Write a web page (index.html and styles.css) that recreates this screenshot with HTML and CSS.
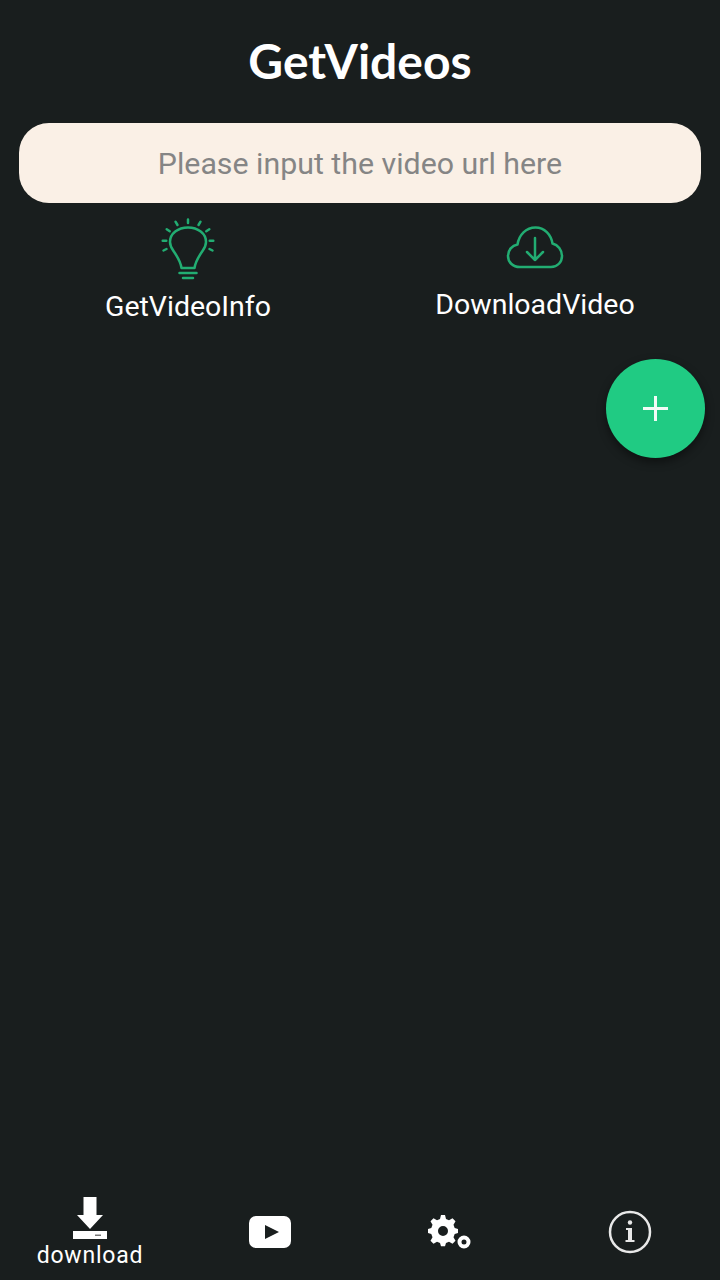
FILE: index.html
```html
<!DOCTYPE html>
<html>
<head>
    <title>GetVideos</title>
    <link rel="stylesheet" href="styles.css">
</head>
<body>
    <div class="app">
        <h1 class="title">GetVideos</h1>
        <div class="url-box">Please input the video url here</div>
        <div class="actions">
            <div class="action action-info">
                <svg class="bulb" width="54" height="64" viewBox="0 0 54 64" fill="none" stroke="#22ad72" stroke-width="2.500" stroke-linecap="round" stroke-linejoin="round">
                    <path d="M27 1.500v3.500M14.500 3.700l2 3.300M39.500 3.700l-2 3.300M5.700 11.300l3 2M48.300 11.300l-3 2M1.700 22.700h3.600M48.700 22.700h3.600M2.500 32.500l3-1.500M51.500 32.500l-3-1.500"/>
                    <path d="M20.500 50C19.500 43 16 38 12.500 33 10 29.500 9 27 9 24 9 15.500 17 9.500 27 9.500S45 15.500 45 24c0 3-1 5.500-3.500 9C38 38 34.500 43 33.500 50z"/>
                    <path d="M18.500 55h17M22 60h10"/>
                </svg>
                <span class="action-label">GetVideoInfo</span>
            </div>
            <div class="action">
                <svg class="cloud" width="58" height="46" viewBox="0 0 58 46" fill="none" stroke="#22ad72" stroke-width="2.500" stroke-linecap="round" stroke-linejoin="round">
                    <path d="M14 42C6.500 42 2 37 2 31c0-6 4-10.500 9.500-11.500C13 10 20 2.500 29.500 2.500c9 0 15.500 7 17 16C52 20 56 25 56 31c0 6-4.500 11-11 11z"/>
                    <path d="M29 13v22M21 27l8 8 8-8"/>
                </svg>
                <span class="action-label">DownloadVideo</span>
            </div>
        </div>
        <div class="fab">
            <svg width="25" height="25" viewBox="0 0 25 25" stroke="#f2fbf6" stroke-width="3">
                <path d="M12.500 0v25M0 12.500h25"/>
            </svg>
        </div>
        <div class="spacer"></div>
        <div class="tabs">
            <div class="tab tab-active">
                <svg width="34" height="44" viewBox="0 0 34 44" fill="#fff">
                    <path d="M10.500 0h13v18H30L17 32 4 18h6.500z"/>
                    <path d="M0 34h34v8H0z"/>
                    <path d="M22 37.500h6v1.500h-6z" fill="#777"/>
                </svg>
                <span class="tab-label">download</span>
            </div>
            <div class="tab">
                <svg width="42" height="32" viewBox="0 0 42 32">
                    <rect width="42" height="32" rx="7" fill="#fff"/>
                    <path d="M16 9l14 7-14 7z" fill="#191e1e"/>
                </svg>
            </div>
            <div class="tab">
                <svg width="44" height="34" viewBox="0 0 44 34" fill="#fff">
                    <path fill-rule="evenodd" d="M13 0h4l1 4 3 1.200 3.500-2 3 3-2 3.500L26.700 13l3.300 1v4l-3.300 1-1.200 3.300 2 3.500-3 3-3.500-2-3 1.200-1 3.300h-4l-1-3.300-3-1.200-3.500 2-3-3 2-3.500L3.300 19 0 18v-4l3.300-1 1.200-3.300-2-3.500 3-3 3.500 2 3-1.200zM15 11a5 5 0 1 0 0 10 5 5 0 0 0 0-10z"/>
                    <path fill-rule="evenodd" d="M36 20.500a6.500 6.500 0 1 1 0 13 6.500 6.500 0 0 1 0-13zM36 24.500a2.500 2.500 0 1 0 0 5 2.500 2.500 0 0 0 0-5z"/>
                </svg>
            </div>
            <div class="tab">
                <svg width="44" height="44" viewBox="0 0 44 44">
                    <circle cx="22" cy="22" r="20" fill="none" stroke="#e8e8e8" stroke-width="2.500"/>
                    <circle cx="22" cy="12.500" r="2.200" fill="#e8e8e8"/>
                    <path d="M18 18h6v12h2.500v2H17.500v-2H20v-10h-2z" fill="#e8e8e8"/>
                </svg>
            </div>
        </div>
    </div>
</body>
</html>
```
FILE: styles.css
```css
html, body {
    margin: 0;
    padding: 0;
}

body {
    background-color: #191e1e;
    color: #fff;
    font-family: 'Roboto', sans-serif;
}

.app {
    position: relative;
    height: 1280px;
    display: flex;
    flex-direction: column;
    overflow: hidden;
}

.title {
    margin: 0;
    padding-top: 33px;
    height: 123px;
    box-sizing: border-box;
    text-align: center;
    font-family: 'Lato', sans-serif;
    font-size: 48px;
    line-height: 55px;
    font-weight: 700;
}

.url-box {
    margin: 0 19px;
    height: 80px;
    line-height: 82px;
    border-radius: 30px;
    background-color: #faf0e6;
    color: #858585;
    text-align: center;
    font-size: 30.300px;
}

.actions {
    display: flex;
    padding: 15px 0 0 16px;
}

.action {
    width: 344px;
    display: flex;
    flex-direction: column;
    align-items: center;
    margin-left: 3px;
}

.action-info {
    margin-left: 0;
}

.action .cloud {
    margin: 7px 0 18px;
}

.action-label {
    font-size: 28.500px;
    line-height: 32px;
}

.action-info .action-label {
    margin-top: 9px;
}

.fab {
    position: absolute;
    left: 606px;
    top: 359px;
    width: 99px;
    height: 99px;
    border-radius: 50%;
    background-color: #20cb83;
    box-shadow: 0 4px 10px rgba(0,0,0,0.45);
    display: flex;
    align-items: center;
    justify-content: center;
}

.spacer {
    flex: 1;
}

.tabs {
    display: flex;
    height: 87px;
    padding-bottom: 9px;
    box-sizing: border-box;
}

.tab {
    width: 180px;
    display: flex;
    flex-direction: column;
    align-items: center;
    justify-content: center;
}

.tab-active {
    padding-top: 1px;
}

.tab-active svg {
    margin-bottom: 2px;
}

.tab-label {
    font-size: 23px;
    line-height: 26px;
    letter-spacing: 0.800px;
}
```
